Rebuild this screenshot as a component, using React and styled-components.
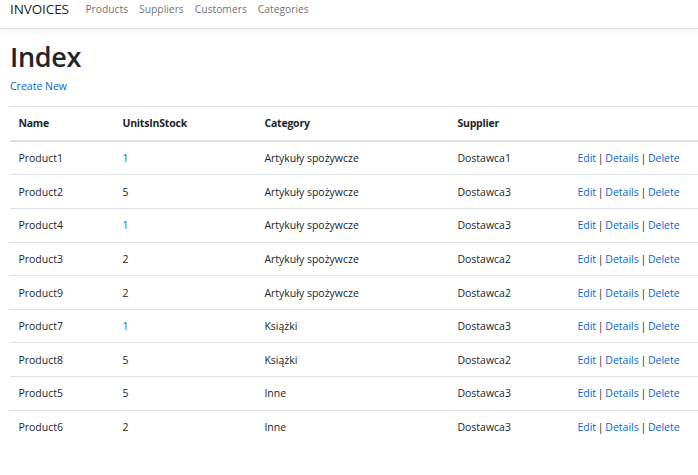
import React from 'react'
import styled, { createGlobalStyle } from 'styled-components'

const Global = createGlobalStyle`
    body {
        margin: 0;
        font-family: "Segoe UI", "Open Sans", "Noto Sans", sans-serif;
        font-size: 10.5px;
        line-height: 16.8px;
        color: #212529;
        background: white;
    }
    * { box-sizing: border-box; }
`

const Navbar = styled.nav`
    height: 29px;
    display: flex;
    align-items: flex-start;
    padding: 0 10px;
    background: white;
    border-bottom: 1px solid #e5e5e5;
    box-shadow: 0 3px 8px rgba(0,0,0,.05);
    margin-bottom: 12px;
    ul {
        display: flex;
        list-style: none;
        margin: 0;
        padding: 0;
        li {
            padding: 0 5.5px;
            line-height: 19px;
            font-size: 10.3px;
            a {
                color: rgba(0,0,0,.6);
                text-decoration: none;
            }
        }
    }
`

const Brand = styled.a`
    font-size: 13.5px;
    line-height: 19px;
    color: #212529;
    text-decoration: none;
    margin-right: 11px;
    letter-spacing: -0.1px;
`

const Main = styled.main`
    padding-left: 10px;
`

const Title = styled.h1`
    font-size: 27px;
    font-weight: 600;
    line-height: 32.4px;
    margin: 1px 0 5px 0;
    letter-spacing: -0.3px;
`

const LinkA = styled.a`
    color: #0366d6;
    text-decoration: none;
`

const CreateP = styled.p`
    margin: 0 0 10.6px 0;
`

const Table = styled.table`
    width: 700px;
    border-collapse: collapse;
    th, td {
        padding: 8.4px 8.4px 7.4px;
        line-height: 16.8px;
        text-align: left;
        vertical-align: top;
        border-top: 1px solid #dee2e6;
    }
    thead th {
        padding-top: 8.4px;
        padding-bottom: 7.9px;
        border-bottom: 2px solid #dee2e6;
        font-weight: 700;
        letter-spacing: -0.2px;
    }
`

const Actions = styled.td`
    word-spacing: -1px;
`

const Sep = styled.span`
    color: #212529;
`

const rows = [
    ['Product1', 1, 'Artykuły spożywcze', 'Dostawca1', true],
    ['Product2', 5, 'Artykuły spożywcze', 'Dostawca3', false],
    ['Product4', 1, 'Artykuły spożywcze', 'Dostawca3', true],
    ['Product3', 2, 'Artykuły spożywcze', 'Dostawca2', false],
    ['Product9', 2, 'Artykuły spożywcze', 'Dostawca2', false],
    ['Product7', 1, 'Książki', 'Dostawca3', true],
    ['Product8', 5, 'Książki', 'Dostawca2', false],
    ['Product5', 5, 'Inne', 'Dostawca3', false],
    ['Product6', 2, 'Inne', 'Dostawca3', false],
]

const Units = styled.td`
    color: ${props => props.one ? '#0366d6' : '#212529'};
`

const App = () => {
    return (
        <React.Fragment>
            <Global />
            <Navbar>
                <Brand href="#">INVOICES</Brand>
                <ul>
                    <li><a href="#">Products</a></li>
                    <li><a href="#">Suppliers</a></li>
                    <li><a href="#">Customers</a></li>
                    <li><a href="#">Categories</a></li>
                </ul>
            </Navbar>
            <Main>
                <Title>Index</Title>
                <CreateP><LinkA href="#">Create New</LinkA></CreateP>
                <Table>
                    <colgroup>
                        <col style={{ width: 104 }} />
                        <col style={{ width: 142 }} />
                        <col style={{ width: 193 }} />
                        <col style={{ width: 120 }} />
                        <col />
                    </colgroup>
                    <thead>
                        <tr>
                            <th>Name</th>
                            <th>UnitsInStock</th>
                            <th>Category</th>
                            <th>Supplier</th>
                            <th></th>
                        </tr>
                    </thead>
                    <tbody>
                        {rows.map(r => (
                            <tr key={r[0]}>
                                <td>{r[0]}</td>
                                <Units one={r[4]}>{r[1]}</Units>
                                <td>{r[2]}</td>
                                <td>{r[3]}</td>
                                <Actions>
                                    <LinkA href="#">Edit</LinkA> <Sep>|</Sep> <LinkA href="#">Details</LinkA> <Sep>|</Sep> <LinkA href="#">Delete</LinkA>
                                </Actions>
                            </tr>
                        ))}
                    </tbody>
                </Table>
            </Main>
        </React.Fragment>
    )
}

export default App
